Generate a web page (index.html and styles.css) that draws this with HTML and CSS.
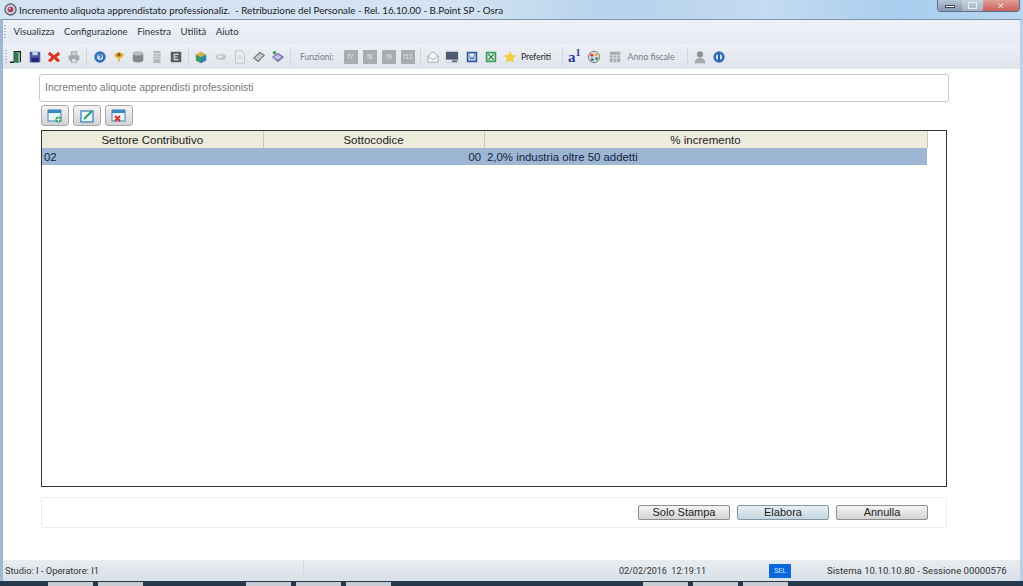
FILE: index.html
```html
<!DOCTYPE html>
<html lang="it">
<head>
<meta charset="utf-8">
<title>Incremento aliquota apprendistato professionaliz.</title>
<link rel="stylesheet" href="styles.css">
</head>
<body>
<div class="app">
  <header class="titlebar">
    <svg class="appicon" viewBox="0 0 14 14"><circle cx="7" cy="7" r="6" fill="#c9ccd6" stroke="#4a4f63" stroke-width="1.2"/><circle cx="7" cy="7" r="3" fill="#b0405a"/><circle cx="6" cy="6" r="1" fill="#f0d0d8"/></svg>
    <span class="title">Incremento aliquota apprendistato professionaliz.&nbsp; - Retribuzione del Personale - Rel. 16.10.00 - B.Point SP - Osra</span>
    <div class="winbtns">
      <span class="wb wb-min"><i></i></span>
      <span class="wb wb-max"><i></i></span>
      <span class="wb wb-close">✕</span>
    </div>
  </header>
  <div class="frame">
    <nav class="menubar">
      <span class="grip"></span>
      <span>Visualizza</span><span>Configurazione</span><span>Finestra</span><span>Utilità</span><span>Aiuto</span>
    </nav>
    <div class="toolbar">
      <span class="grip"></span>
      <div class="tgroup">
        <svg class="ic" viewBox="0 0 16 16"><path d="M1 14h5M6 14V2h7v12" fill="none" stroke="#1a2a20" stroke-width="1.5"/><path d="M6 2l5 2v11l-5-1z" fill="#2f7d4f"/></svg>
        <svg class="ic" viewBox="0 0 16 16"><path d="M2 2h11l1 1v11H2z" fill="#4a55a8"/><rect x="5" y="2" width="6" height="4" fill="#c8d0ea"/><rect x="4" y="9" width="8" height="5" fill="#1f2a70"/></svg>
        <svg class="ic" viewBox="0 0 16 16"><path d="M3 2l5 4 5-4 2 3-4 3 4 4-3 2-4-4-4 4-3-2 4-4-4-3z" fill="#d8351f"/></svg>
        <svg class="ic" viewBox="0 0 16 16"><rect x="5" y="2" width="6" height="4" fill="#d0d4d8" stroke="#9a9fa5"/><rect x="2" y="6" width="12" height="6" rx="1" fill="#a4a9ae"/><rect x="5" y="10" width="6" height="4" fill="#dfe2e5" stroke="#9a9fa5"/></svg>
      </div>
      <span class="sep sep-first"></span>
      <div class="tgroup">
        <svg class="ic" viewBox="0 0 16 16"><circle cx="8" cy="8" r="6.500" fill="#2d6fc0"/><circle cx="8" cy="8" r="3.500" fill="#cfe0f4"/><path d="M6.500 7c0-2 3-2 3 0 0 1-1.500 1-1.500 2.500" fill="none" stroke="#1c4a90" stroke-width="1.200"/></svg>
        <svg class="ic" viewBox="0 0 16 16"><path d="M2 5l6-3 6 3-3 4H9v4H7V9H5z" fill="#e3b341"/><circle cx="8" cy="5.500" r="2" fill="#8a5a12"/></svg>
        <svg class="ic" viewBox="0 0 16 16"><ellipse cx="8" cy="4" rx="6" ry="2.500" fill="#b9bcbf"/><path d="M2 4v8c0 3 12 3 12 0V4c0 3-12 3-12 0z" fill="#84888c"/></svg>
        <svg class="ic" viewBox="0 0 16 16"><rect x="4" y="1" width="8" height="14" fill="#b4b7ba"/><path d="M5 4h6M5 7h6M5 10h6" stroke="#eceded"/></svg>
        <svg class="ic" viewBox="0 0 16 16"><rect x="2" y="2" width="12" height="12" fill="#565d5f"/><path d="M11 5H6v6h5M6 8h4" fill="none" stroke="#d9dcdc" stroke-width="1.300"/></svg>
      </div>
      <span class="sep"></span>
      <div class="tgroup">
        <svg class="ic" viewBox="0 0 16 16"><path d="M2 5l6-3 6 3-6 3z" fill="#d8b03a"/><path d="M2 5v7l6 3V8z" fill="#3b9c5a"/><path d="M14 5v7l-6 3V8z" fill="#2f7fb8"/></svg>
        <svg class="ic" viewBox="0 0 16 16"><ellipse cx="8" cy="8" rx="6" ry="3.500" fill="#c4c7ca"/><ellipse cx="7" cy="7.500" rx="2.500" ry="1.500" fill="#eceeef"/></svg>
        <svg class="ic" viewBox="0 0 16 16"><path d="M3 1h7l3 3v11H3z" fill="#eef0f1" stroke="#b8bcc0"/><path d="M5 7h6M5 10h6" stroke="#c4c8cc"/></svg>
        <svg class="ic" viewBox="0 0 16 16"><path d="M1 9l8-7 6 4-8 8z" fill="#777c80"/><path d="M3 9l6-5 4 2-6 6z" fill="#c9cccf"/></svg>
        <svg class="ic" viewBox="0 0 16 16"><path d="M1 8l7-5 7 5-7 6z" fill="#7c77b8"/><path d="M3 8l5-3 4 3-4 3z" fill="#c5c3e0"/><circle cx="4" cy="3" r="2" fill="#3f9c5a"/></svg>
      </div>
      <span class="sep"></span>
      <span class="tlabel funz">Funzioni:</span>
      <div class="tgroup">
        <span class="fkey">f7</span><span class="fkey">f8</span><span class="fkey">f9</span><span class="fkey">f11</span>
      </div>
      <span class="sep"></span>
      <div class="tgroup">
        <svg class="ic" viewBox="0 0 16 16"><path d="M2 7l6-5 6 5v7H2z" fill="#f2f4f6" stroke="#a4a9af"/><path d="M2 7l6 4 6-4" fill="none" stroke="#a4a9af"/></svg>
        <svg class="ic" viewBox="0 0 16 16"><rect x="1" y="2" width="14" height="12" fill="#4e5a6e"/><rect x="1" y="11" width="14" height="3" fill="#e8eaee"/><rect x="8" y="12" width="6" height="1.500" fill="#3a4658"/></svg>
        <svg class="ic" viewBox="0 0 16 16"><rect x="2" y="2" width="12" height="12" fill="#2f5aa8"/><rect x="4" y="4" width="8" height="8" fill="#e8eef8"/><path d="M5 6l1.500 5L8 8l1.500 3L11 5" fill="none" stroke="#2f5aa8"/></svg>
        <svg class="ic" viewBox="0 0 16 16"><rect x="2" y="2" width="12" height="12" fill="#3f9a5c"/><rect x="4" y="4" width="8" height="8" fill="#dff0e4"/><path d="M5 5l6 6M11 5l-6 6" stroke="#23703d" stroke-width="1.300"/></svg>
        <svg class="ic" viewBox="0 0 16 16"><path d="M8 1l2.200 4.500 4.800.700-3.500 3.400.800 4.900L8 12.200l-4.300 2.300.800-4.900L1 6.200l4.800-.700z" fill="#f2cf3e"/></svg>
      </div>
      <span class="tlabel pref">Preferiti</span>
      <span class="sep"></span>
      <div class="tgroup">
        <span class="aone">a<sup>1</sup></span>
        <svg class="ic" viewBox="0 0 16 16"><circle cx="8" cy="8" r="6.500" fill="#d8dadc" stroke="#777"/><circle cx="5.500" cy="6" r="1.700" fill="#d83a2a"/><circle cx="10.500" cy="5.500" r="1.700" fill="#e8b52e"/><circle cx="11" cy="10" r="1.700" fill="#2f9c4c"/><circle cx="6" cy="11" r="1.700" fill="#3564b8"/></svg>
        <svg class="ic ic-cal" viewBox="0 0 16 16"><rect x="2" y="2" width="12" height="12" fill="#a9acaf"/><path d="M2 6h12M2 9h12M6 6v8M10 6v8" stroke="#e2e4e5"/></svg>
      </div>
      <span class="tlabel anno">Anno fiscale</span>
      <span class="sep"></span>
      <div class="tgroup">
        <svg class="ic" viewBox="0 0 16 16"><circle cx="8" cy="5" r="3.500" fill="#8e9194"/><path d="M2 15c0-5 3-6 6-6s6 1 6 6z" fill="#a6a9ac"/></svg>
        <svg class="ic" viewBox="0 0 16 16"><circle cx="8" cy="8" r="6.500" fill="#2d6fc0"/><circle cx="8" cy="8" r="3.500" fill="#cfe0f4"/><rect x="7" y="4" width="2" height="8" fill="#1c4a90"/></svg>
      </div>
    </div>
    <main class="content">
      <div class="heading">Incremento aliquote apprendisti professionisti</div>
      <div class="actions">
        <button class="act"><svg class="acticon" viewBox="0 0 16 14"><rect x="1" y="1" width="13" height="11" fill="#eaf4fb" stroke="#3d86c0"/><rect x="1" y="1" width="13" height="3" fill="#3d86c0"/><circle cx="11.500" cy="10.500" r="3" fill="#3aa655"/><path d="M11.500 8.500v4M9.500 10.500h4" stroke="#fff"/></svg></button>
        <button class="act"><svg class="acticon" viewBox="0 0 16 14"><rect x="2" y="2" width="12" height="11" fill="#eaf4fb" stroke="#3d86c0" stroke-width="1.300"/><path d="M5 10L13 2" stroke="#2f9c6a" stroke-width="2"/></svg></button>
        <button class="act"><svg class="acticon" viewBox="0 0 16 14"><rect x="1" y="1" width="13" height="11" fill="#eaf4fb" stroke="#3d86c0"/><rect x="1" y="1" width="13" height="3" fill="#3d86c0"/><path d="M4 7l5 5M9 7l-5 5" stroke="#d8351f" stroke-width="2"/></svg></button>
      </div>
      <div class="gridbox">
        <table class="grid">
          <colgroup><col class="c1"><col class="c2"><col class="c3"></colgroup>
          <thead><tr><th>Settore Contributivo</th><th>Sottocodice</th><th>% incremento</th></tr></thead>
          <tbody><tr><td>02</td><td class="num">00</td><td class="desc">2,0% industria oltre 50 addetti</td></tr></tbody>
        </table>
      </div>
      <div class="footer">
        <button class="btn">Solo Stampa</button>
        <button class="btn btn-def">Elabora</button>
        <button class="btn">Annulla</button>
      </div>
    </main>
    <footer class="status">
      <span class="st-left">Studio: I - Operatore: I1</span>
      <span class="st-date">02/02/2016&nbsp; 12:19:11</span>
      <span class="st-sel"><b>SEL</b></span>
      <span class="st-sys">Sistema 10.10.10.80 - Sessione 00000576</span>
    </footer>
  </div>
  <div class="taskbar">
    <i class="tb-orb"></i><i class="tb"></i><i class="tb tb-gap"></i><i class="tb"></i><i class="tb"></i><i class="tb tb-s"></i><i class="tb"></i><i class="tb"></i><i class="tb"></i>
  </div>
</div>
</body>
</html>
```
FILE: styles.css
```css
* { box-sizing: border-box; }
html, body { margin: 0; padding: 0; }
body { width: 1023px; height: 586px; overflow: hidden; font-family: "Liberation Sans", Arial, sans-serif; color: #222; background: #fff; }
.app { display: flex; flex-direction: column; width: 1023px; height: 586px; }

.titlebar { flex: 0 0 19px; display: flex; align-items: center; padding-left: 4px; background: linear-gradient(90deg, #d5e4f3 0%, #d3e3f3 45%, #b6d2ec 60%, #c4dbf1 75%, #a9cdee 88%, #b9d6f0 100%); }
.appicon { width: 13px; height: 13px; margin-right: 2px; }
.title { font-family: Lato, sans-serif; font-size: 9.800px; color: #222; white-space: nowrap; }
.winbtns { margin-left: auto; margin-right: 3px; align-self: flex-start; display: flex; height: 12px; border: 1px solid #5c6f86; border-top: 0; border-radius: 0 0 4px 4px; overflow: hidden; }
.wb { display: flex; align-items: center; justify-content: center; height: 100%; }
.wb-min { width: 24px; background: linear-gradient(#b8c6d6, #8497ad); }
.wb-min i { display: block; width: 10px; height: 3px; background: #fff; border: 1px solid #445; margin-top: 2px; }
.wb-max { width: 21px; background: linear-gradient(#c6d2de, #a4b4c4); }
.wb-max i { display: block; width: 9px; height: 7px; border: 1px solid #e8eef4; }
.wb-close { width: 36px; background: linear-gradient(#e2a098, #c8605a); color: #f6d8d4; font-size: 9px; }

.frame { flex: 1; display: flex; flex-direction: column; min-height: 0; border-left: 3px solid #9db7d4; border-right: 3px solid #b9d2ea; border-top: 1px solid #7f94ab; }
.menubar { flex: 0 0 24px; display: flex; align-items: center; gap: 9.500px; padding-left: 1px; font-family: Lato, sans-serif; font-size: 9.600px; color: #2a3340; background: linear-gradient(#edf1f7, #e6ebf3); border-bottom: 1px solid #e9edf3; }
.grip { width: 2px; height: 14px; margin-right: -2px; background: repeating-linear-gradient(#a9b8cc 0 1px, transparent 1px 3px); flex: none; }

.toolbar { flex: 0 0 25px; display: flex; align-items: center; padding-left: 2px; background: linear-gradient(#edf1f7, #dfe4ea); }
.toolbar .grip { margin-right: 2px; }
.tgroup { display: flex; align-items: center; gap: 5.200px; }
.ic { width: 14px; height: 14px; flex: none; }
.ic-cal { margin-left: 2px; }
.sep { width: 1px; height: 19px; background: #cfd6de; margin: 0 5px; flex: none; }
.sep-first { margin-right: 6px; }
.tlabel { font-family: Lato, sans-serif; font-size: 8.500px; color: #777d85; white-space: nowrap; }
.funz { margin: 0 10px 0 4px; }
.pref { color: #222; margin: 0 6px 0 4px; }
.anno { margin: 0 7px 0 5px; font-size: 8.800px; }
.fkey { width: 14px; height: 14px; font-size: 7px; line-height: 14px; text-align: center; background: #aaadb0; color: #e2e4e6; flex: none; }
.aone { width: 14px; font-family: "Liberation Serif", serif; font-weight: bold; font-size: 15px; line-height: 14px; color: #27409a; white-space: nowrap; flex: none; }
.aone sup { font-size: 10px; line-height: 0; color: #27409a; }

.content { flex: 1; display: flex; flex-direction: column; padding: 5px 0 0 36px; background: #fff; min-height: 0; }
.heading { width: 910px; height: 28px; display: flex; align-items: center; padding: 0 0 2px 5px; border: 1px solid #c8c8c8; border-radius: 3px; font-size: 10.400px; color: #777; font-family: "Liberation Sans", sans-serif; }
.actions { display: flex; gap: 4px; margin: 3px 0 0 2px; }
.act { width: 28px; height: 21px; padding: 0; display: flex; align-items: center; justify-content: center; border: 1px solid #a8a8a8; border-radius: 3px; background: linear-gradient(#f4f4f4, #d2d2d2); }
.acticon { width: 16px; height: 14px; }
.gridbox { margin: 4px 0 0 2px; width: 906px; height: 357px; border: 1px solid #333; background: #fff; }
.grid { width: 885px; table-layout: fixed; border-collapse: collapse; font-size: 11.300px; color: #1c1c1c; }
.c1 { width: 221px; } .c2 { width: 221px; } .c3 { width: 443px; }
.grid th { height: 17px; padding: 0; font-weight: normal; background: #ecebdc; border-right: 1px solid #c9c8b4; font-size: 11.500px; }
.grid td { height: 17px; padding: 0 3px 0 2px; background: #9cb6d4; color: #12233b; }
.grid .num { text-align: right; }
.grid .desc { padding-left: 3px; font-size: 11.400px; }
.footer { display: flex; justify-content: flex-end; align-items: center; gap: 7px; margin: 10px 0 0 2px; width: 906px; height: 31px; padding-right: 18px; border: 1px solid #ededed; border-radius: 2px; }
.btn { width: 92px; height: 15px; padding: 0; font-family: "Liberation Sans", sans-serif; font-size: 11px; line-height: 13px; color: #222; border: 1px solid #8d8d8d; border-radius: 2px; background: linear-gradient(#f3f3f3, #d4d4d4); }
.btn-def { background: linear-gradient(#e8f0f6, #c6d4de); border-color: #7f98a8; }

.status { flex: 0 0 21px; display: flex; align-items: center; font-family: Roboto, sans-serif; font-size: 9.600px; color: #333; background: linear-gradient(#e9edf2, #d9e0e8); }
.st-left { width: 301px; padding-left: 2px; height: 100%; display: flex; align-items: center; border-right: 1px solid #d5dbe3; font-size: 9.300px; }
.st-date { margin-left: 315px; width: 150px; white-space: nowrap; font-size: 9px; }
.st-sel { width: 22px; height: 14px; background: #0a68dc; color: #cfe2ff; font-size: 7px; display: flex; align-items: center; justify-content: center; margin-right: 36px; }
.st-sel b { font-weight: normal; }
.st-sys { white-space: nowrap; }

.taskbar { flex: 0 0 5px; display: flex; gap: 5px; padding-top: 1px; background: #26384c; }
.tb-orb { width: 43px; }
.tb { width: 45px; height: 4px; background: #c6ccd2; }
.tb-gap { margin-right: 98px; }
.tb-s { margin-right: 247px; }
```
